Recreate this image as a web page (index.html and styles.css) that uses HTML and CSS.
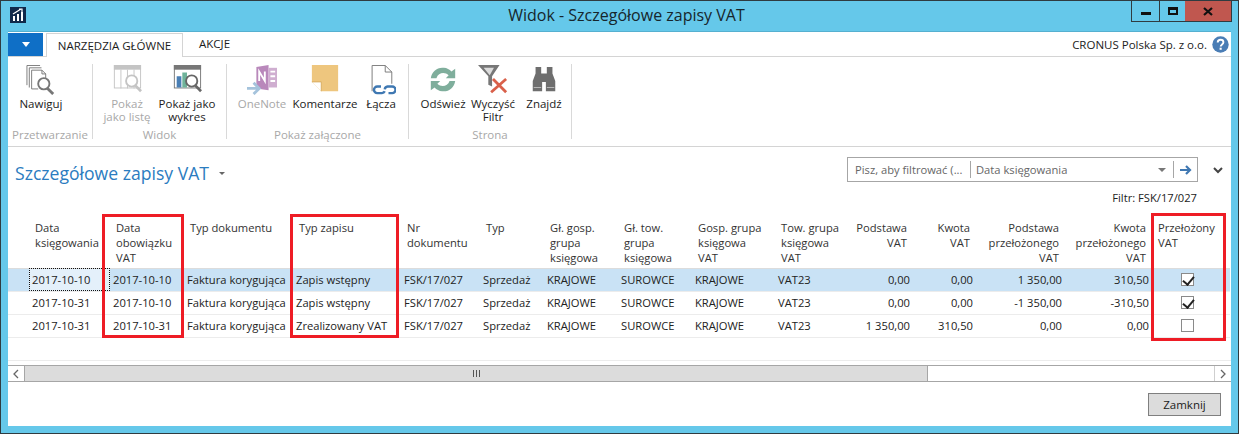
FILE: index.html
```html
<!DOCTYPE html>
<html lang="pl">

<head>
	<meta charset="UTF-8">
	<title>Widok - Szczegółowe zapisy VAT</title>
	<link rel="stylesheet" href="styles.css">
</head>

<body>
	<div class="window">
		<header class="titlebar">
			<svg class="app-logo" width="16" height="16" viewBox="0 0 16 16">
				<rect width="16" height="16" fill="#10294a" />
				<path d="M3 14V9h2v5zM7 14V7h2v7zM11 14V5h2v9z" fill="#fff" />
				<path d="M3 7l8-5M9 2h3v3" fill="none" stroke="#fff" stroke-width="1.2" />
			</svg>
			<div class="title">Widok - Szczegółowe zapisy VAT</div>
			<div class="caption">
				<div class="cap-btn cap-min"><span></span></div>
				<div class="cap-btn cap-max"><span></span></div>
				<div class="cap-btn cap-close">
					<svg width="10" height="9" viewBox="0 0 10 9">
						<path d="M1 1l8 7M9 1L1 8" stroke="#111" stroke-width="2.2" fill="none" />
					</svg>
				</div>
			</div>
		</header>

		<div class="content">
			<nav class="tabs">
				<div class="file-btn"><span class="file-arrow"></span></div>
				<div class="tab tab-active">NARZĘDZIA GŁÓWNE</div>
				<div class="tab">AKCJE</div>
				<div class="company">CRONUS Polska Sp. z o.o.</div>
				<svg class="help" width="17" height="17" viewBox="0 0 17 17">
					<circle cx="8.5" cy="8.5" r="8.2" fill="#4a7db5" />
					<path d="M5.7 6.4c0-1.6 1.2-2.6 2.9-2.6s2.8 1 2.8 2.4c0 2.2-2.7 2.2-2.7 4.3" fill="none" stroke="#fff" stroke-width="1.9" />
					<rect x="7.6" y="11.7" width="2.1" height="2.1" fill="#fff" />
				</svg>
			</nav>

			<section class="ribbon">
				<div class="group g-process">
					<div class="group-btns">
						<div class="rb w50">
							<svg class="icon" viewBox="0 0 32 32">
								<path d="M1 .5h14M1 .5v21M3.500 3h13M3.500 3v21M6 5.500h11l4 4v6M6 5.500v20h7" fill="none" stroke="#777" />
								<path d="M17 5.500v4h4" fill="none" stroke="#777" />
								<circle cx="19" cy="20" r="6" fill="#fff" stroke="#777" stroke-width="2" />
								<path d="M23 25l6 6" stroke="#777" stroke-width="3" />
							</svg>
							<span>Nawiguj</span>
						</div>
					</div>
					<div class="group-label">Przetwarzanie</div>
				</div>

				<div class="group g-view">
					<div class="group-btns">
						<div class="rb w60 off">
							<svg class="icon" viewBox="0 0 32 32">
								<rect x="2.500" y=".5" width="28" height="24" fill="#fff" stroke="#c4c4c4" />
								<rect x="2" y="0" width="29" height="5" fill="#c4c4c4" />
								<path d="M9.500 5v20M16.500 5v20M23.500 5v20" stroke="#c4c4c4" />
								<circle cx="21" cy="17" r="6" fill="#fff" stroke="#c4c4c4" stroke-width="2" />
								<path d="M25 22l6 6" stroke="#c4c4c4" stroke-width="3" />
							</svg>
							<span>Pokaż<br>jako listę</span>
						</div>
						<div class="rb w60">
							<svg class="icon" viewBox="0 0 32 32">
								<rect x="2.500" y=".5" width="28" height="24" fill="#fff" stroke="#777" />
								<rect x="2" y="0" width="29" height="5" fill="#777" />
								<rect x="5" y="12" width="5" height="12" fill="#4a7fb5" />
								<rect x="11" y="8" width="5" height="16" fill="#6fb39a" />
								<circle cx="21" cy="17" r="6" fill="#fff" stroke="#666" stroke-width="2" />
								<path d="M25 22l6 6" stroke="#666" stroke-width="3" />
							</svg>
							<span>Pokaż jako<br>wykres</span>
						</div>
					</div>
					<div class="group-label">Widok</div>
				</div>

				<div class="group g-attach">
					<div class="group-btns">
						<div class="rb w62 off">
							<svg class="icon" viewBox="0 0 32 32">
								<path d="M10 2l13-2v27l-13-2z" fill="#b988bb" />
								<path d="M23 3h9v21h-9z" fill="#cfaed0" />
								<path d="M25 7h5M25 12h5M25 17h5" stroke="#fff" stroke-width="2" />
								<path d="M13 17V7l6 10V7" fill="none" stroke="#fff" stroke-width="2" />
								<path d="M0 25h11M7 19l6 6-6 6" fill="none" stroke="#a5c3dc" stroke-width="3" />
							</svg>
							<span>OneNote</span>
						</div>
						<div class="rb w64">
							<svg class="icon" viewBox="0 0 32 32">
								<path d="M2 0h28v28H12L2 18z" fill="#eec67e" />
								<path d="M2 18h10v10z" fill="#fff" />
								<path d="M2 18h10v10" fill="none" stroke="#d8ac60" />
							</svg>
							<span>Komentarze</span>
						</div>
						<div class="rb w48">
							<svg class="icon" viewBox="0 0 32 32">
								<path d="M6.500 28V.5h14l7 7V20M20.500 .5v7h7" fill="none" stroke="#777" />
								<path d="M16 23h-4a3.500 3.500 0 0 0 0 7h5a3.500 3.500 0 0 0 3-2M20 26a3.500 3.500 0 0 1 3-3h5a3.500 3.500 0 0 1 0 7h-4" fill="none" stroke="#3f78b2" stroke-width="2.600" />
							</svg>
							<span>Łącza</span>
						</div>
					</div>
					<div class="group-label">Pokaż załączone</div>
				</div>

				<div class="group g-page">
					<div class="group-btns">
						<div class="rb w50">
							<svg class="icon" viewBox="0 0 32 32">
								<path d="M3 14C4 7 10 2 17 3c3 0 6 2 8 4l4-3v10H19l3-3c-4-4-11-3-13 3z" fill="#7fae9c" />
								<path d="M29 17c-1 7-7 12-14 11-3 0-6-2-8-4l-4 3V17h10l-3 3c4 4 11 3 13-3z" fill="#7fae9c" />
							</svg>
							<span>Odśwież</span>
						</div>
						<div class="rb w50">
							<svg class="icon" viewBox="0 0 32 32">
								<path d="M0 0h23l-8 12v11l-4-2v-9z" fill="#777" />
								<path d="M6 3h11l-4.500 8z" fill="#ddd" />
								<path d="M14 29L30 15M16 15l14 14" stroke="#d9604a" stroke-width="3" />
							</svg>
							<span>Wyczyść<br>Filtr</span>
						</div>
						<div class="rb w52">
							<svg class="icon" viewBox="0 0 32 32">
								<path d="M7 2h6v7h6V2h6v7l3 8v11H18V18h-4v10H4V17l3-8z" fill="#6e6e6e" />
								<path d="M5 24h8M19 24h8" stroke="#bbb" />
							</svg>
							<span>Znajdź</span>
						</div>
					</div>
					<div class="group-label">Strona</div>
				</div>
			</section>

			<div class="page-head">
				<h1 class="page-title">Szczegółowe zapisy VAT</h1>
				<span class="title-arrow"></span>
				<div class="filter-box">
					<span class="filter-hint">Pisz, aby filtrować (...</span>
					<span class="filter-field">Data księgowania</span>
					<span class="filter-drop"></span>
					<span class="filter-go">
						<svg width="12" height="10" viewBox="0 0 12 10">
							<path d="M0 5h10M6 1l4 4-4 4" fill="none" stroke="#3f78b2" stroke-width="2.200" />
						</svg>
					</span>
				</div>
				<svg class="collapse" width="10" height="7" viewBox="0 0 10 7">
					<path d="M1 1l4 4 4-4" fill="none" stroke="#444" stroke-width="2" />
				</svg>
			</div>
			<div class="filter-note">Filtr: FSK/17/027</div>

			<div class="grid-wrap">
				<table class="grid">
					<colgroup>
						<col class="c-sel">
						<col class="c1">
						<col class="c2">
						<col class="c3">
						<col class="c4">
						<col class="c5">
						<col class="c6">
						<col class="c7">
						<col class="c8">
						<col class="c9">
						<col class="c10">
						<col class="c11">
						<col class="c12">
						<col class="c13">
						<col class="c14">
						<col class="c15">
					</colgroup>
					<thead>
						<tr>
							<th></th>
							<th>Data<br>księgowania</th>
							<th>Data<br>obowiązku<br>VAT</th>
							<th>Typ dokumentu</th>
							<th>Typ zapisu</th>
							<th>Nr<br>dokumentu</th>
							<th>Typ</th>
							<th>Gł. gosp.<br>grupa<br>księgowa</th>
							<th>Gł. tow.<br>grupa<br>księgowa</th>
							<th>Gosp. grupa<br>księgowa<br>VAT</th>
							<th>Tow. grupa<br>księgowa<br>VAT</th>
							<th class="num">Podstawa<br>VAT</th>
							<th class="num">Kwota<br>VAT</th>
							<th class="num">Podstawa<br>przełożonego<br>VAT</th>
							<th class="num">Kwota<br>przełożonego<br>VAT</th>
							<th>Przełożony<br>VAT</th>
						</tr>
					</thead>
					<tbody>
						<tr class="selected">
							<td></td>
							<td class="focus">2017-10-10</td>
							<td>2017-10-10</td>
							<td>Faktura korygująca</td>
							<td>Zapis wstępny</td>
							<td>FSK/17/027</td>
							<td>Sprzedaż</td>
							<td>KRAJOWE</td>
							<td>SUROWCE</td>
							<td>KRAJOWE</td>
							<td>VAT23</td>
							<td class="num">0,00</td>
							<td class="num">0,00</td>
							<td class="num">1 350,00</td>
							<td class="num">310,50</td>
							<td class="chk-cell"><span class="chk checked"></span></td>
						</tr>
						<tr>
							<td></td>
							<td>2017-10-31</td>
							<td>2017-10-10</td>
							<td>Faktura korygująca</td>
							<td>Zapis wstępny</td>
							<td>FSK/17/027</td>
							<td>Sprzedaż</td>
							<td>KRAJOWE</td>
							<td>SUROWCE</td>
							<td>KRAJOWE</td>
							<td>VAT23</td>
							<td class="num">0,00</td>
							<td class="num">0,00</td>
							<td class="num">-1 350,00</td>
							<td class="num">-310,50</td>
							<td class="chk-cell"><span class="chk checked"></span></td>
						</tr>
						<tr>
							<td></td>
							<td>2017-10-31</td>
							<td>2017-10-31</td>
							<td>Faktura korygująca</td>
							<td>Zrealizowany VAT</td>
							<td>FSK/17/027</td>
							<td>Sprzedaż</td>
							<td>KRAJOWE</td>
							<td>SUROWCE</td>
							<td>KRAJOWE</td>
							<td>VAT23</td>
							<td class="num">1 350,00</td>
							<td class="num">310,50</td>
							<td class="num">0,00</td>
							<td class="num">0,00</td>
							<td class="chk-cell"><span class="chk"></span></td>
						</tr>
					</tbody>
				</table>
				<!-- red callouts drawn over the grid -->
				<div class="callout callout-1"></div>
				<div class="callout callout-2"></div>
				<div class="callout callout-3"></div>
			</div>

			<div class="scrollbar">
				<div class="sb-btn">
					<svg width="6" height="10" viewBox="0 0 6 10"><path d="M5 1L1 5l4 4" fill="none" stroke="#666" stroke-width="1.300" /></svg>
				</div>
				<div class="sb-thumb"><span class="sb-grip"></span></div>
				<div class="sb-track"></div>
				<div class="sb-btn sb-right">
					<svg width="6" height="10" viewBox="0 0 6 10"><path d="M1 1l4 4-4 4" fill="none" stroke="#666" stroke-width="1.300" /></svg>
				</div>
			</div>

			<footer class="footer">
				<button type="button" class="close-btn">Zamknij</button>
			</footer>
		</div>
	</div>
</body>

</html>
```

FILE: styles.css
```css
* {
	box-sizing: border-box;
}

body {
	margin: 0;
	font-family: "Open Sans", "Noto Sans", sans-serif;
	font-size: 11.5px;
	color: #222;
}

.window {
	width: 1239px;
	height: 434px;
	background-color: #65c8ea;
	border: 1px solid #2f3b40;
	padding: 0 7px 7px 7px;
	display: flex;
	flex-direction: column;
}

/* title bar */
.titlebar {
	height: 30px;
	flex: none;
	display: flex;
	align-items: flex-start;
	position: relative;
}

.app-logo {
	margin: 6px 0 0 2px;
}

.title {
	position: absolute;
	left: 0;
	right: 0;
	top: 4px;
	padding-left: 14px;
	text-align: center;
	font-size: 16px;
	line-height: 20px;
	color: #16262c;
}

.caption {
	margin-left: auto;
	margin-right: -1px;
	display: flex;
	height: 21px;
	position: relative;
	border: 1px solid #2f3b40;
	border-top: none;
}

.cap-btn {
	display: flex;
	align-items: center;
	justify-content: center;
}

.cap-min {
	width: 28px;
	border-right: 1px solid #2f3b40;
}

.cap-min span {
	width: 10px;
	height: 3px;
	margin-top: 4px;
	background-color: #111;
}

.cap-max {
	width: 25px;
}

.cap-max span {
	width: 10px;
	height: 8px;
	border: 2px solid #111;
	border-top-width: 3px;
}

.cap-close {
	width: 46px;
	background-color: #c0574f;
}

/* main area */
.content {
	flex: 1;
	background-color: #fff;
	border-top: 1px solid #55b0d0;
	display: flex;
	flex-direction: column;
	min-height: 0;
}

.tabs {
	height: 25px;
	flex: none;
	display: flex;
	align-items: flex-end;
	border-bottom: 1px solid #d4d4d4;
}

.file-btn {
	width: 35px;
	height: 23px;
	margin-right: 3px;
	align-self: flex-start;
	margin-top: 1px;
	background-color: #0f6fc6;
	display: flex;
	align-items: center;
	justify-content: center;
}

.file-arrow {
	border: 4px solid transparent;
	border-top: 5px solid #fff;
	border-bottom: none;
}

.tab {
	height: 24px;
	padding: 0 16px;
	line-height: 24px;
	color: #1c1c1c;
}

.tab-active {
	width: 137px;
	padding: 0;
	text-align: center;
	background-color: #fff;
	border: 1px solid #d4d4d4;
	border-bottom: none;
	height: 24px;
	margin-bottom: -1px;
}

.company {
	margin-left: auto;
	align-self: center;
	margin-right: 5px;
}

.help {
	align-self: center;
	margin-right: 2px;
}

/* ribbon */
.ribbon {
	height: 90px;
	flex: none;
	display: flex;
	padding-top: 7px;
	border-bottom: 1px solid #d4d4d4;
}

.group {
	height: 75px;
	display: flex;
	flex-direction: column;
	border-right: 1px solid #d9d9d9;
}

.g-process {
	width: 85px;
	padding-left: 8px;
}

.g-view {
	width: 134px;
	padding-left: 4px;
}

.g-attach {
	width: 182px;
	padding-left: 4px;
}

.g-page {
	width: 163px;
	padding-left: 9px;
}

.group-btns {
	display: flex;
	height: 64px;
	flex: none;
}

.group-label {
	margin-left: -8px;
	text-align: center;
	color: #a8a8a8;
	line-height: 14px;
}

.g-view .group-label,
.g-attach .group-label {
	margin-left: -4px;
}

.g-page .group-label {
	margin-left: -9px;
}

.rb {
	display: flex;
	flex-direction: column;
	align-items: center;
	text-align: center;
	line-height: 13px;
	color: #1c1c1c;
	white-space: nowrap;
}

.rb.off {
	color: #a8a8a8;
}

.icon {
	width: 30px;
	height: 30px;
	margin-top: 1px;
	margin-bottom: 2px;
	flex: none;
}

.w48 {
	width: 48px;
}

.w50 {
	width: 50px;
}

.w52 {
	width: 52px;
}

.w60 {
	width: 60px;
}

.w62 {
	width: 62px;
}

.w64 {
	width: 64px;
}

/* page header */
.page-head {
	height: 43px;
	flex: none;
	display: flex;
	align-items: flex-start;
	padding-top: 10px;
}

.page-title {
	margin: 5px 0 0 7px;
	font-size: 17.600px;
	line-height: 22px;
	font-weight: 400;
	color: #2b7cc0;
}

.title-arrow {
	margin: 15px 0 0 10px;
	border: 3px solid transparent;
	border-top: 3px solid #666;
	border-bottom: none;
}

.filter-box {
	margin-left: auto;
	width: 351px;
	height: 25px;
	border: 1px solid #a6a6a6;
	display: flex;
	align-items: center;
	font-size: 11.200px;
	color: #666;
}

.filter-hint {
	width: 123px;
	padding-left: 7px;
	border-right: 1px solid #a6a6a6;
	line-height: 17px;
	white-space: nowrap;
}

.filter-field {
	padding-left: 5px;
	flex: 1;
}

.filter-drop {
	margin-right: 7px;
	border: 4px solid transparent;
	border-top: 4px solid #777;
	border-bottom: none;
}

.filter-go {
	width: 24px;
	height: 17px;
	border-left: 1px solid #a6a6a6;
	display: flex;
	align-items: center;
	justify-content: center;
}

.collapse {
	margin: 10px 8px 0 15px;
}

.filter-note {
	height: 25px;
	flex: none;
	padding-right: 34px;
	text-align: right;
	font-size: 11.200px;
	line-height: 16px;
}

/* grid */
.grid-wrap {
	position: relative;
	height: 146px;
	flex: none;
	border-bottom: 1px solid #ececec;
}

.grid {
	width: 1222px;
	border-collapse: collapse;
	table-layout: fixed;
	font-size: 11.200px;
}

.c-sel {
	width: 21px;
}

.c1 {
	width: 81px;
}

.c2 {
	width: 74px;
}

.c3 {
	width: 109px;
}

.c4 {
	width: 108px;
}

.c5 {
	width: 79px;
}

.c6 {
	width: 64px;
}

.c7 {
	width: 74px;
}

.c8 {
	width: 74px;
}

.c9 {
	width: 83px;
}

.c10 {
	width: 70px;
}

.c11 {
	width: 68px;
}

.c12 {
	width: 63px;
}

.c13 {
	width: 89px;
}

.c14 {
	width: 87px;
}

.c15 {
	width: 78px;
}

.grid th {
	height: 53px;
	padding: 5px 6px 0;
	vertical-align: top;
	text-align: left;
	font-weight: 400;
	line-height: 15px;
	color: #333;
	white-space: nowrap;
	border-bottom: 1px solid #dcdcdc;
}

.grid th.num {
	text-align: right;
}

.grid td {
	height: 23px;
	padding: 0 3px;
	white-space: nowrap;
	color: #222;
	border-bottom: 1px solid #ececec;
}

.grid td.num {
	text-align: right;
}

.selected td {
	background-color: #c9e2f5;
}

.selected td.focus {
	background-color: #e4f0fa;
	outline: 1px dotted #111;
	outline-offset: -1px;
}

.chk-cell {
	padding-left: 29px !important;
}

.chk {
	display: block;
	width: 13px;
	height: 13px;
	border: 1px solid #8a8a8a;
	background-color: #fff;
	position: relative;
}

.chk.checked::after {
	content: "";
	position: absolute;
	left: 3px;
	top: 0;
	width: 5px;
	height: 9px;
	border: solid #222;
	border-width: 0 2.500px 2.500px 0;
	transform: rotate(40deg);
}

.callout {
	position: absolute;
	border: 3px solid #ee1c25;
	pointer-events: none;
}

.callout-1 {
	left: 94px;
	top: -1px;
	width: 82px;
	height: 124px;
}

.callout-2 {
	left: 282px;
	top: -1px;
	width: 109px;
	height: 124px;
}

.callout-3 {
	left: 1143px;
	top: -2px;
	width: 75px;
	height: 128px;
}

/* horizontal scrollbar */
.scrollbar {
	height: 17px;
	margin-top: 4px;
	flex: none;
	display: flex;
	border-top: 1px solid #a6a6a6;
	border-bottom: 1px solid #a6a6a6;
}

.sb-btn {
	width: 17px;
	display: flex;
	align-items: center;
	justify-content: center;
	border-right: 1px solid #a6a6a6;
}

.sb-right {
	border-right: none;
	border-left: 1px solid #cfcfcf;
}

.sb-thumb {
	width: 903px;
	background-color: #dcdcdc;
	border-right: 1px solid #a6a6a6;
	display: flex;
	align-items: center;
	justify-content: center;
}

.sb-grip {
	width: 7px;
	height: 7px;
	background: repeating-linear-gradient(90deg, #555 0 1px, transparent 1px 3px);
}

.sb-track {
	flex: 1;
}

/* footer */
.footer {
	flex: 1;
	display: flex;
	justify-content: flex-end;
	padding: 11px 10px 0 0;
}

.close-btn {
	width: 73px;
	height: 23px;
	font: inherit;
	color: #222;
	background-color: #dcdcdc;
	border: 1px solid #7f7f7f;
}
```
